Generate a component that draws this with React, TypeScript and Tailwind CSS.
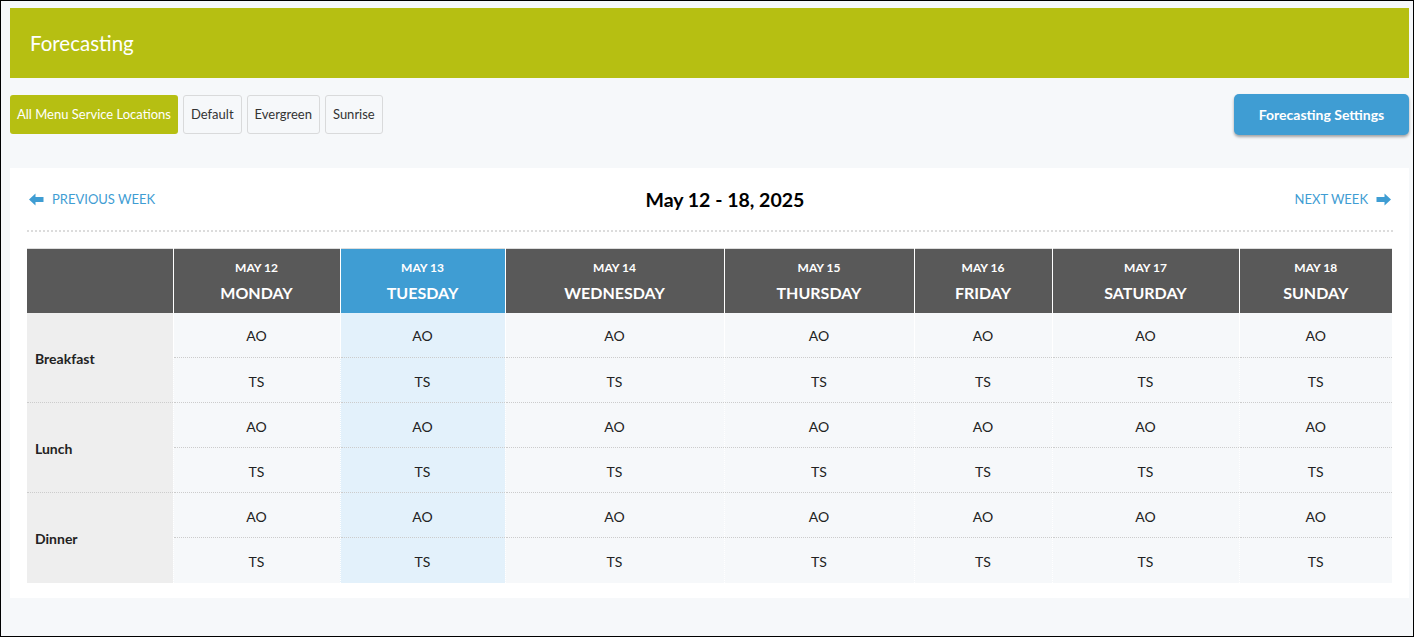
import React from "react";

const days = [
  { date: "MAY 12", name: "MONDAY", w: 167 },
  { date: "MAY 13", name: "TUESDAY", w: 165, today: true },
  { date: "MAY 14", name: "WEDNESDAY", w: 219 },
  { date: "MAY 15", name: "THURSDAY", w: 190 },
  { date: "MAY 16", name: "FRIDAY", w: 138 },
  { date: "MAY 17", name: "SATURDAY", w: 187 },
  { date: "MAY 18", name: "SUNDAY", w: 153 },
];

const meals = ["Breakfast", "Lunch", "Dinner"];

function ArrowLeft() {
  return (
    <svg width="15" height="13" viewBox="0 0 15 13" fill="#3f9dd3">
      <path d="M0 6.5 L6.5 0.5 L6.5 4 L14.5 4 L14.5 9 L6.5 9 L6.5 12.5 Z" />
    </svg>
  );
}
function ArrowRight() {
  return (
    <svg width="15" height="13" viewBox="0 0 15 13" fill="#3f9dd3">
      <path d="M15 6.5 L8.5 0.5 L8.5 4 L0.5 4 L0.5 9 L8.5 9 L8.5 12.5 Z" />
    </svg>
  );
}

export default function App() {
  return (
    <div
      className="w-[1414px] h-[637px] border border-black bg-[#f6f8fa] overflow-hidden"
      style={{ fontFamily: "Lato, 'Open Sans', sans-serif" }}
    >
      <div className="ml-[9px] mr-[4px] mt-[7px] h-[70px] bg-[#b6bf12] flex items-center pl-[20px]">
        <h1 className="text-white text-[20.5px] leading-none">Forecasting</h1>
      </div>

      <div className="ml-[9px] mr-[4px] mt-[16px] flex items-center justify-between">
        <div className="flex items-center gap-[5px]">
          <button className="h-[39px] w-[168px] rounded-[3px] bg-[#b6bf12] text-white text-[13px]">
            All Menu Service Locations
          </button>
          {["Default", "Evergreen", "Sunrise"].map((l) => (
            <button
              key={l}
              className="h-[39px] px-[7px] rounded-[3px] border border-[#d9dadb] bg-[#f6f8fa] text-[#333] text-[13px]"
            >
              {l}
            </button>
          ))}
        </div>
        <button className="h-[41px] w-[175px] rounded-[5px] bg-[#3f9dd3] text-white text-[14px] font-bold shadow-[0_2px_3px_rgba(0,0,0,0.35)]">
          Forecasting Settings
        </button>
      </div>

      <div className="ml-[9px] mr-[4px] mt-[33px] bg-white pl-[17px] pr-[16px] pt-[20px] pb-[15px]">
        <div className="flex items-center justify-between h-[22px] px-[2px] pt-[1px]">
          <a className="flex items-center gap-[8px] text-[#3f9dd3] text-[13px] cursor-pointer">
            <ArrowLeft />
            <span>PREVIOUS WEEK</span>
          </a>
          <h2 className="text-[19.5px] font-bold text-black">May 12 - 18, 2025</h2>
          <a className="flex items-center gap-[8px] text-[#3f9dd3] text-[13px] cursor-pointer">
            <span>NEXT WEEK</span>
            <ArrowRight />
          </a>
        </div>
        <div className="mt-[20px] border-t-2 border-dotted border-[#dcdcdc]" />

        <table className="mt-[16px] table-fixed border-collapse w-[1365px] border-t border-[#dddddd]">
          <colgroup>
            <col style={{ width: 146 }} />
            {days.map((d) => (
              <col key={d.name} style={{ width: d.w }} />
            ))}
          </colgroup>
          <thead>
            <tr className="h-[64px]">
              <th className="bg-[#595959]" />
              {days.map((d) => (
                <th
                  key={d.name}
                  className={`border-l border-white text-white font-bold text-center ${
                    d.today ? "bg-[#3f9dd3]" : "bg-[#595959]"
                  }`}
                >
                  <div className="text-[12px] leading-[15px]">{d.date}</div>
                  <div className="text-[16px] leading-[19px] mt-[8px]">{d.name}</div>
                </th>
              ))}
            </tr>
          </thead>
          <tbody>
            {meals.map((m, mi) =>
              ["AO", "TS"].map((code, ci) => (
                <tr key={m + code} className="h-[45px]">
                  {ci === 0 && (
                    <td
                      rowSpan={2}
                      className={`bg-[#eeeeee] pl-[8px] pt-[2px] text-[14px] font-bold text-[#222] align-middle ${
                        mi > 0 ? "border-t border-dotted border-[#cccccc]" : ""
                      }`}
                    >
                      {m}
                    </td>
                  )}
                  {days.map((d) => (
                    <td
                      key={d.name}
                      className={`border-l border-l-white text-center text-[14px] text-[#222] pt-[2px] ${
                        d.today ? "bg-[#e3f1fb]" : "bg-[#f6f8fa]"
                      } ${mi > 0 || ci > 0 ? "border-t border-t-[#cccccc] border-dotted" : ""}`}
                    >
                      {code}
                    </td>
                  ))}
                </tr>
              ))
            )}
          </tbody>
        </table>
      </div>
    </div>
  );
}
